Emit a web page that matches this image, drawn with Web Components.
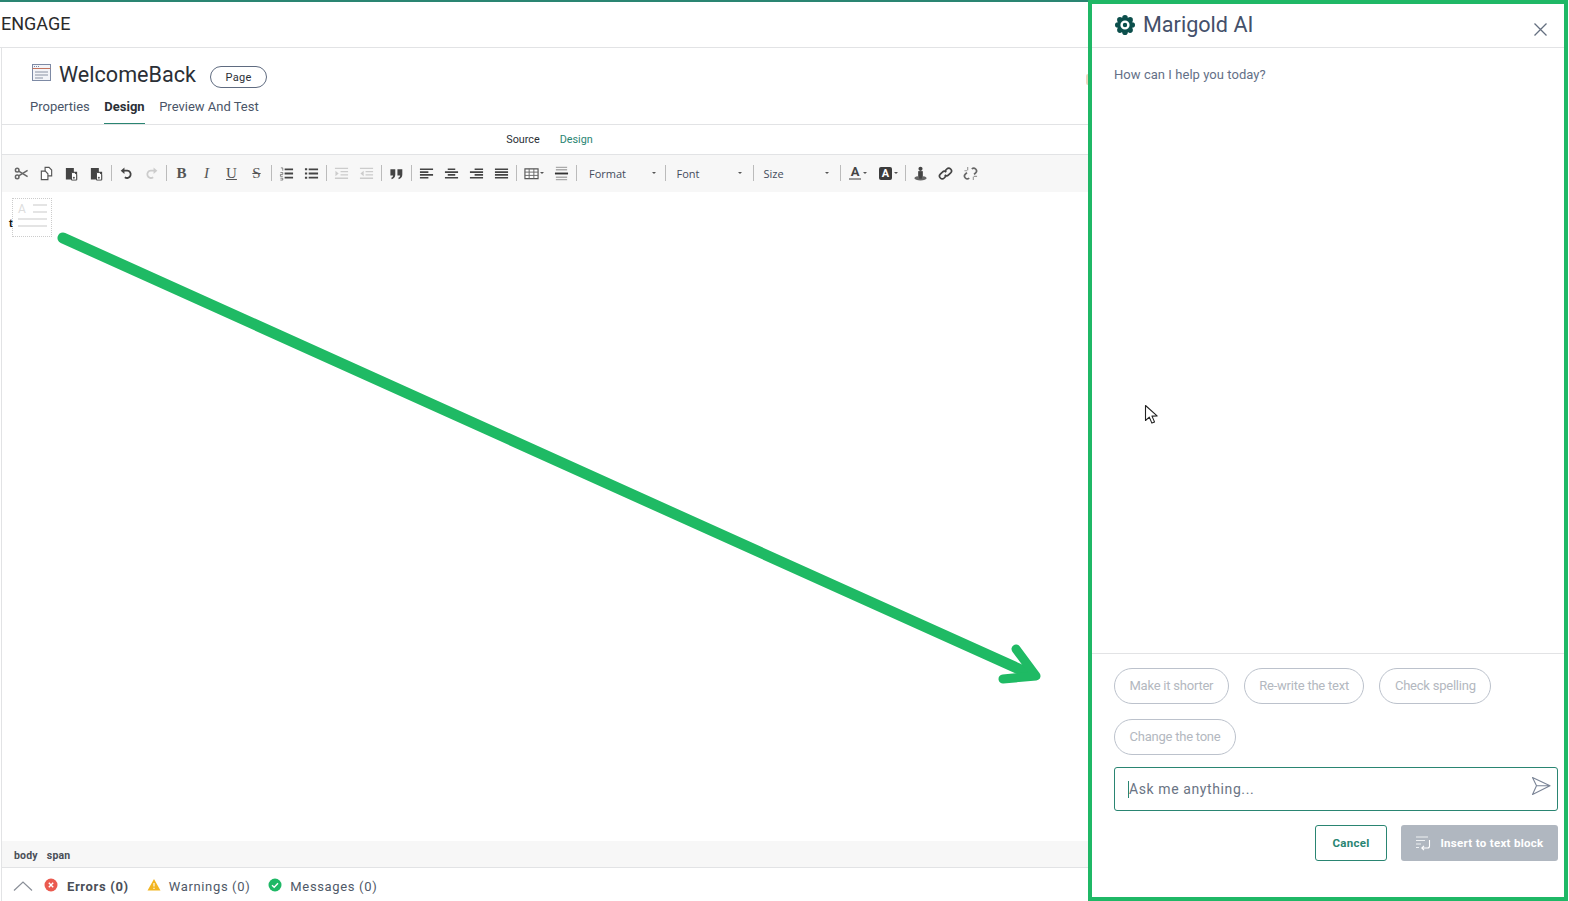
<!DOCTYPE html>
<html lang="en">
<head>
<meta charset="utf-8">
<title>Marigold AI</title>
<style>
  html, body { margin: 0; padding: 0; height: 100%; background: #fff; overflow: hidden; }
  body { font-family: Roboto, "Liberation Sans", sans-serif; }
</style>
</head>
<body>
<app-shell>
  <editor-pane slot="left"></editor-pane>
  <ai-panel slot="right"></ai-panel>
  <arrow-overlay slot="overlay"></arrow-overlay>
</app-shell>

<script>
// iconos del toolbar, viewBox 16x16
const ICONS = {
  cut: '<g fill="none" stroke="#666" stroke-width="1.6"><circle cx="3.4" cy="4.4" r="1.9"/><circle cx="3.4" cy="11.6" r="1.9"/><path d="M5 5.400 14.500 11.400M5 10.600 14.500 4.600"/></g>',
  copy: '<g fill="#fff" stroke="#555" stroke-width="1.2"><path d="M6.5 1.5h4.2l2.8 2.8v6.2h-7z"/><path d="M2.5 5.5h4.2l2.8 2.8v6.2h-7z"/></g>',
  paste: '<path d="M2 2h8.5v4H14v8.5H2z" fill="#444"/><path d="M8 7h3.2l2.3 2.3v5.7H8z" fill="#fff" stroke="#444"/><path d="M9.500 12.500h2M10.500 11.500v2" stroke="#444"/>',
  undo: '<path d="M5.200 5h3.600a3.900 3.900 0 1 1-2.600 7" fill="none" stroke="#444" stroke-width="1.900"/><path d="M1.800 5 5.800 1.600v6.800z" fill="#444"/>',
  redo: '<path d="M10.800 5H7.200a3.900 3.900 0 1 0 2.600 7" fill="none" stroke="#ccc" stroke-width="1.900"/><path d="M14.200 5 10.200 1.600v6.800z" fill="#ccc"/>',
  ol: '<path d="M6 3.500h9M6 8h9M6 12.500h9" stroke="#444" stroke-width="1.900"/><path d="M2 2h2v3M1.500 7h2.500v2H1.500v2H4M1.500 13h2.500v2H1.500" fill="none" stroke="#666" stroke-width=".8"/>',
  ul: '<path d="M5 3.500h10M5 8h10M5 12.500h10" stroke="#444" stroke-width="1.900"/><path d="M1 3.500h2.400M1 8h2.400M1 12.500h2.400" stroke="#444" stroke-width="2.200"/>',
  indent: '<path d="M1 2.500h14M7 6h8M7 9.500h8M1 13h14" stroke="#ccc" stroke-width="1.500"/><path d="M1.500 5v6l3.500-3z" fill="#ccc"/>',
  outdent: '<path d="M1 2.500h14M7 6h8M7 9.500h8M1 13h14" stroke="#ccc" stroke-width="1.500"/><path d="M5 5v6L1.500 8z" fill="#ccc"/>',
  quote: '<path d="M1.500 3.500h5.200v5.600c0 2.600-1.400 4.300-3.800 4.900l-.5-1.500c1.200-.4 1.900-1.200 2-2.400H1.500zM9 3.500h5.200v5.600c0 2.600-1.400 4.300-3.800 4.900l-.5-1.500c1.200-.4 1.900-1.200 2-2.400H9z" fill="#444"/>',
  left: '<path d="M1 3.500h14M1 6.500h9M1 9.500h14M1 12.500h9" stroke="#444" stroke-width="1.700"/>',
  center: '<path d="M4 3.500h8M1 6.500h14M4 9.500h8M1 12.500h14" stroke="#444" stroke-width="1.700"/>',
  right: '<path d="M6 3.500h9M1 6.500h14M6 9.500h9M1 12.500h14" stroke="#444" stroke-width="1.700"/>',
  justify: '<path d="M1 3.500h14M1 6.500h14M1 9.500h14M1 12.500h14" stroke="#444" stroke-width="1.700"/>',
  table: '<path d="M1 3h14v10.500H1z" fill="#fff" stroke="#555" stroke-width="1.200"/><path d="M5.500 3v10.500M10.500 3v10.500M1 6.500h14M1 10h14" stroke="#666" stroke-width="1"/>',
  hr: '<path d="M2 1.500h12M2 4h12M2 12h12M2 14.500h12" stroke="#aaa" stroke-width="1.400"/><path d="M1 8h14" stroke="#333" stroke-width="2"/>',
  anchor: '<circle cx="8" cy="3" r="2.200" fill="#444"/><path d="M5.500 5.500h5v7h-5z" fill="#444"/><ellipse cx="8" cy="13" rx="6.500" ry="2.400" fill="#666"/><path d="M6.500 6v7.500h3V6z" fill="#444"/>',
  link: '<g fill="none" stroke="#444" stroke-width="1.800"><path d="M7.600 5.200 9.400 3.200a2.900 2.900 0 0 1 4.100 0 2.900 2.900 0 0 1 0 4.100L11.300 9.400a2.900 2.900 0 0 1-4.100 0"/><path d="M8.400 10.800 6.600 12.800a2.900 2.900 0 0 1-4.100 0 2.900 2.900 0 0 1 0-4.100L4.700 6.600a2.900 2.900 0 0 1 4.100 0"/></g>',
  unlink: '<g fill="none" stroke="#666" stroke-width="1.800"><path d="M9.400 3.200a2.900 2.900 0 0 1 4.100 0 2.900 2.900 0 0 1 0 4.100L11.800 9"/><path d="M6.600 12.800a2.900 2.900 0 0 1-4.100 0 2.900 2.900 0 0 1 0-4.100L4.200 7"/></g><path d="M5 1v3.500M1.500 5H4.500M11 11.500V15M11.500 11h3.500" stroke="#999" stroke-width="1.200"/>'
};

class AppShell extends HTMLElement {
  constructor() {
    super();
    this.attachShadow({ mode: 'open' });
    this.shadowRoot.innerHTML = `
      <style>
        :host { display: grid; grid-template-columns: 1088px 480px 1px; width: 1569px; height: 901px; position: relative; overflow: hidden; }
        ::slotted(*) { min-width: 0; min-height: 0; }
      </style>
      <slot name="left"></slot>
      <slot name="right"></slot>
      <slot name="overlay"></slot>
    `;
  }
}

class EditorPane extends HTMLElement {
  constructor() {
    super();
    this.attachShadow({ mode: 'open' });
    this.shadowRoot.innerHTML = `
      <style>
        :host { display: flex; flex-direction: column; height: 901px; box-sizing: border-box; border-top: 2px solid #2a8572; position: relative; color: #2b2f36; }
        .brand { height: 46px; box-sizing: border-box; flex: none; display: flex; align-items: center; padding: 0 0 2px 1px; font-size: 18px; color: #2a2a2a; border-bottom: 1px solid #e2e3e5; }
        .body { flex: 1; display: flex; flex-direction: column; border-left: 1px solid #e2e3e5; margin-left: 1px; min-height: 0; }
        .peek { position: absolute; right: 0; top: 72px; width: 2px; height: 11px; background: #ecd6bc; border-radius: 2px 0 0 2px; }
      </style>
      <div class="brand">ENGAGE</div>
      <div class="body">
        <page-heading></page-heading>
        <source-switch></source-switch>
        <editor-toolbar></editor-toolbar>
        <editor-canvas></editor-canvas>
        <path-bar></path-bar>
        <status-bar></status-bar>
      </div>
      <div class="peek"></div>
    `;
  }
}

class PageHeading extends HTMLElement {
  constructor() {
    super();
    this.attachShadow({ mode: 'open' });
    this.shadowRoot.innerHTML = `
      <style>
        :host { display: block; flex: none; height: 77px; box-sizing: border-box; border-bottom: 1px solid #e2e3e5; padding: 0 0 0 28px; }
        .title { display: flex; align-items: center; height: 45px; padding-top: 8px; box-sizing: border-box; }
        svg { display: block; margin: -3px 7px 0 2px; }
        h1 { margin: 0; font-size: 21.600px; font-weight: 400; color: #2b2f36; line-height: 30px; }
        .badge { margin: 5px 0 0 14px; width: 57px; height: 22px; box-sizing: border-box; border: 1px solid #5f6b80; border-radius: 11px; font-size: 11px; display: flex; align-items: center; justify-content: center; color: #2b2f36; letter-spacing: .3px; }
        nav { display: flex; gap: 14.500px; font-size: 13px; color: #4a5568; height: 31px; }
        nav span { height: 31px; box-sizing: border-box; padding-top: 6px; line-height: 16px; }
        nav .on { font-weight: 700; color: #2b2f36; border-bottom: 1px solid #2a8572; }
      </style>
      <div class="title">
        <svg width="20" height="18" viewBox="0 0 20 18" fill="none">
          <rect x=".5" y=".5" width="18" height="16" fill="#f3f4f8" stroke="#7d8aa5"/>
          <path d="M.5 4.500h18" stroke="#c2745f"/>
          <path d="M2 2.500h1M4 2.500h1M6 2.500h1" stroke="#7d8aa5"/>
          <path d="M3 8h13M3 11h13M3 14h8" stroke="#8a92a3"/>
        </svg>
        <h1>WelcomeBack</h1>
        <div class="badge">Page</div>
      </div>
      <nav>
        <span>Properties</span>
        <span class="on">Design</span>
        <span>Preview And Test</span>
      </nav>
    `;
  }
}

class SourceSwitch extends HTMLElement {
  constructor() {
    super();
    this.attachShadow({ mode: 'open' });
    this.shadowRoot.innerHTML = `
      <style>
        :host { display: flex; flex: none; height: 30px; box-sizing: border-box; border-bottom: 1px solid #e2e3e5; justify-content: center; align-items: center; gap: 20px; font-size: 10.800px; color: #2b2f36; padding: 0 0 1px 9px; }
        .on { color: #2a8572; }
      </style>
      <span>Source</span><span class="on">Design</span>
    `;
  }
}

class EditorToolbar extends HTMLElement {
  constructor() {
    super();
    this.attachShadow({ mode: 'open' });
    // | es un separador, texto y combos tienen su propio tipo
    const items = ['cut','copy','paste','paste','|','undo','redo','|','t:B','t:I','t:U','t:S','|','ol','ul','|','indent','outdent','|','quote','|','left','center','right','justify','|','table','hr','|','c:Format','|','c:Font','|','c:Size','|','fg','bg','|','anchor','link','unlink'];
    const html = items.map(it => {
      if (it === '|') return '<i class="sep"></i>';
      if (it.startsWith('c:')) return `<span class="combo ${it.slice(2)}">${it.slice(2)}<b class="caret"></b></span>`;
      if (it.startsWith('t:')) return `<span class="btn txt ${it.slice(2)}">${it.slice(2)}</span>`;
      if (it === 'fg') return '<span class="btn wide"><span class="fg">A</span><b class="caret"></b></span>';
      if (it === 'bg') return '<span class="btn wide bgw"><span class="bgc">A</span><b class="caret"></b></span>';
      if (it === 'table') return `<span class="btn tbl"><svg width="15" height="15" viewBox="0 0 16 16">${ICONS.table}</svg><b class="caret"></b></span>`;
      return `<span class="btn"><svg width="15" height="15" viewBox="0 0 16 16">${ICONS[it]}</svg></span>`;
    }).join('');
    this.shadowRoot.innerHTML = `
      <style>
        :host { display: flex; flex: none; align-items: center; height: 37px; box-sizing: border-box; background: #f7f7f7; padding: 0 0 1px 7px; }
        .btn { flex: none; width: 25px; height: 22px; display: flex; align-items: center; justify-content: center; }
        .sep { flex: none; width: 1px; height: 16px; background: #bbb; margin: 0 2px; }
        .txt { font-family: "Liberation Serif", serif; font-size: 15px; color: #555; line-height: 1; }
        .B { font-weight: 700; }
        .I { font-style: italic; }
        .U { text-decoration: underline; }
        .S { text-decoration: line-through; }
        .tbl { width: 30px; gap: 1px; box-sizing: border-box; }
        .wide { width: 30px; gap: 2px; }
        .bgw { width: 29px; margin-left: 1px; }
        .combo { flex: none; width: 84px; box-sizing: border-box; padding: 0 7px 0 10px; display: flex; align-items: center; justify-content: space-between; font-family: "Open Sans", sans-serif; font-size: 11px; color: #444c5c; }
        .combo.Font { width: 83px; padding: 0 9px 0 8.500px; }
        .combo.Size { width: 82px; padding: 0 9px 0 7.500px; }
        .caret { width: 0; height: 0; border: 2px solid transparent; border-top: 2.500px solid #555; border-bottom: 0; flex: none; }
        .fg { font: 700 13px Roboto, sans-serif; color: #444; border-bottom: 2px solid #999; line-height: 12px; padding: 0 2px; }
        .bgc { font: 700 11px Roboto, sans-serif; color: #fff; background: #3c3c3c; border-radius: 2px; line-height: 13px; padding: 0 3px; }
      </style>
      ${html}
    `;
  }
}

class EditorCanvas extends HTMLElement {
  constructor() {
    super();
    this.attachShadow({ mode: 'open' });
    this.shadowRoot.innerHTML = `
      <style>
        :host { display: block; flex: 1; position: relative; min-height: 0; background: #fff; }
        .ph { position: absolute; left: 10px; top: 6px; width: 38px; height: 37px; border: 1px dotted #ccc; }
        .ph span { position: absolute; left: 5px; top: 3px; font-size: 12px; color: #ddd; line-height: 14px; }
        .ph svg { position: absolute; left: 0; top: 0; }
        .t { position: absolute; left: 7px; top: 24px; font: 700 11px/14px "Liberation Sans", sans-serif; color: #111; }
      </style>
      <div class="ph">
        <span>A</span>
        <svg width="38" height="37" viewBox="0 0 38 37" fill="none">
          <path d="M20 6h14M20 13h14M5 20h29M5 27h29" stroke="#dcdcdc" stroke-width="1.500"/>
        </svg>
      </div>
      <span class="t">t</span>
    `;
  }
}

class PathBar extends HTMLElement {
  constructor() {
    super();
    this.attachShadow({ mode: 'open' });
    this.shadowRoot.innerHTML = `
      <style>
        :host { display: flex; flex: none; align-items: center; gap: 9px; height: 27px; box-sizing: border-box; background: #f7f7f7; border-bottom: 1px solid #e2e3e5; padding: 2px 0 0 12px; font-size: 10.500px; font-weight: 700; color: #4a4f58; letter-spacing: .2px; }
      </style>
      <span>body</span><span>span</span>
    `;
  }
}

class StatusItem extends HTMLElement {
  constructor() {
    super();
    this.attachShadow({ mode: 'open' });
    const kind = this.getAttribute('kind');
    const svg = {
      error: '<circle cx="7" cy="7" r="6.500" fill="#ea5a4f"/><path d="M4.800 4.800l4.400 4.400M9.200 4.800l-4.400 4.400" stroke="#fff" stroke-width="1.400"/>',
      warn: '<path d="M7 1 13.500 12.500H.5z" fill="#f2b521"/><path d="M7 5v3.500M7 9.800v1.200" stroke="#fff" stroke-width="1.100"/>',
      ok: '<circle cx="7" cy="7" r="6.500" fill="#1fb866"/><path d="M4 7.200 6.200 9.200 10 5.200" fill="none" stroke="#fff" stroke-width="1.400"/>'
    }[kind];
    this.shadowRoot.innerHTML = `
      <style>
        :host { display: flex; align-items: center; gap: 8px; font-size: 13px; letter-spacing: .65px; color: #4f5968; }
        :host([kind=error]) { font-weight: 700; color: #4a4f58; gap: 9px; }
        svg { display: block; margin-top: -3px; }
      </style>
      <svg width="14" height="14" viewBox="0 0 14 14">${svg}</svg>
      <slot></slot>
    `;
  }
}

class StatusBar extends HTMLElement {
  constructor() {
    super();
    this.attachShadow({ mode: 'open' });
    this.shadowRoot.innerHTML = `
      <style>
        :host { display: flex; flex: none; height: 33px; box-sizing: border-box; align-items: center; gap: 18px; padding: 4px 0 0 11px; font-size: 13px; }
        svg { display: block; margin: -2px -7px 0 0; }
      </style>
      <svg width="20" height="10" viewBox="0 0 20 10" fill="none"><path d="M1 9.500 10 1l9 8.500" stroke="#8a8f98" stroke-width="1.200"/></svg>
      <status-item kind="error">Errors (0)</status-item>
      <status-item kind="warn">Warnings (0)</status-item>
      <status-item kind="ok">Messages (0)</status-item>
    `;
  }
}

class PromptChip extends HTMLElement {
  constructor() {
    super();
    this.attachShadow({ mode: 'open' });
    this.shadowRoot.innerHTML = `
      <style>
        :host { display: inline-flex; align-items: center; height: 36px; box-sizing: border-box; padding: 0 14.500px 2px; border: 1px solid #bcc2cc; border-radius: 18px; font-size: 13px; letter-spacing: -.23px; color: #b3b8c0; white-space: nowrap; }
      </style>
      <slot></slot>
    `;
  }
}

class AiPanel extends HTMLElement {
  constructor() {
    super();
    this.attachShadow({ mode: 'open' });
    this.shadowRoot.innerHTML = `
      <style>
        :host { display: flex; flex-direction: column; height: 901px; box-sizing: border-box; border: 4px solid #1fb866; background: #fff; color: #4a5568; position: relative; z-index: 2; }
        header { flex: none; height: 44px; box-sizing: border-box; display: flex; align-items: center; padding: 0 17px 2px 22px; border-bottom: 1px solid #e2e3e5; }
        .gear { display: block; margin-right: 7px; flex: none; }
        h2 { margin: 0; font-size: 21.600px; font-weight: 400; color: #44506a; flex: 1; line-height: 28px; }
        .close { display: block; margin-top: 10px; }
        .msg { flex: 1; padding: 19px 22px; font-size: 13px; letter-spacing: .05px; line-height: 16px; color: #647087; min-height: 0; }
        footer { flex: none; height: 244px; box-sizing: border-box; border-top: 1px solid #e2e3e5; padding: 14px 6px 0 22px; display: flex; flex-direction: column; }
        .chips { display: flex; flex-wrap: wrap; gap: 15px; }
        .ask { margin-top: 12px; height: 44px; box-sizing: border-box; border: 1px solid #2a8572; border-radius: 3px; display: flex; align-items: center; padding: 0 6px 0 13px; font-size: 14px; letter-spacing: .6px; color: #6a7484; }
        .ask .caret { width: 1px; height: 17px; background: #2a8572; flex: none; }
        .ask span { flex: 1; }
        .ask svg { display: block; margin-top: -7px; }
        .actions { margin-top: 14px; display: flex; justify-content: flex-end; gap: 14px; }
        .btn { height: 36px; box-sizing: border-box; border-radius: 3px; display: flex; align-items: center; justify-content: center; font-size: 11.500px; font-weight: 700; letter-spacing: .3px; }
        .cancel { width: 72px; border: 1px solid #2a8572; color: #2a8572; }
        .insert { width: 157px; background: #b0b7c0; color: #fff; gap: 9px; }
        .insert svg { display: block; }
      </style>
      <header>
        <svg class="gear" width="22" height="22" viewBox="0 0 22 22">
          <g fill="#0c4f4c">
            <circle cx="11" cy="11" r="7.500"/>
            <circle cx="11" cy="3.800" r="2.800"/><circle cx="11" cy="18.200" r="2.800"/>
            <circle cx="3.800" cy="11" r="2.800"/><circle cx="18.200" cy="11" r="2.800"/>
            <circle cx="5.900" cy="5.900" r="2.800"/><circle cx="16.100" cy="5.900" r="2.800"/>
            <circle cx="5.900" cy="16.100" r="2.800"/><circle cx="16.100" cy="16.100" r="2.800"/>
          </g>
          <circle cx="11" cy="11" r="3.400" fill="none" stroke="#fff" stroke-width="2.400"/>
        </svg>
        <h2>Marigold AI</h2>
        <svg class="close" width="13" height="13" viewBox="0 0 13 13" fill="none"><path d="M.5.500l12 12M12.500.500l-12 12" stroke="#646f80" stroke-width="1.300"/></svg>
      </header>
      <div class="msg">How can I help you today?</div>
      <footer>
        <div class="chips">
          <prompt-chip>Make it shorter</prompt-chip>
          <prompt-chip>Re-write the text</prompt-chip>
          <prompt-chip>Check spelling</prompt-chip>
          <prompt-chip>Change the tone</prompt-chip>
        </div>
        <div class="ask">
          <i class="caret"></i><span>Ask me anything...</span>
          <svg width="20" height="20" viewBox="0 0 20 20" fill="none"><path d="M1.500 1.500 19 9.800 1.500 18.500 5.500 9.800zM5.500 9.800H19" stroke="#7a8496" stroke-width="1.100" stroke-linejoin="round"/></svg>
        </div>
        <div class="actions">
          <div class="btn cancel">Cancel</div>
          <div class="btn insert">
            <svg width="16" height="16" viewBox="0 0 16 16" fill="none"><path d="M1 2h12M1 5.500h9M1 9h5M1 12.500h3" stroke="#fff" stroke-width="1.100" opacity=".8"/><path d="M14.500 5v6a2 2 0 0 1-2 2H7M9 10.800 6.800 13 9 15.200" stroke="#fff" stroke-width="1.100"/></svg>
            <span>Insert to text block</span>
          </div>
        </div>
      </footer>
      <svg style="position:absolute;left:52px;top:400px;" width="16" height="22" viewBox="0 0 16 22">
        <path d="M1.500 1.500v15l3.800-3.400 2.600 6 2.600-1.200-2.500-5.800 5.100-.2z" fill="#fff" stroke="#222" stroke-width="1.100" stroke-linejoin="round"/>
      </svg>
    `;
  }
}

// flecha verde, va por encima del editor
class ArrowOverlay extends HTMLElement {
  constructor() {
    super();
    this.attachShadow({ mode: 'open' });
    this.shadowRoot.innerHTML = `
      <style>
        :host { position: absolute; left: 0; top: 0; pointer-events: none; z-index: 1; display: block; }
        svg { display: block; }
      </style>
      <svg width="1088" height="901" viewBox="0 0 1088 901" fill="none">
        <path d="M63 238 1030 674" stroke="#1fba64" stroke-width="11" stroke-linecap="round"/>
        <path d="M1016 649 1036 676 1003 679" stroke="#1fba64" stroke-width="9" stroke-linecap="round" stroke-linejoin="round"/>
      </svg>
    `;
  }
}

customElements.define('app-shell', AppShell);
customElements.define('editor-pane', EditorPane);
customElements.define('page-heading', PageHeading);
customElements.define('source-switch', SourceSwitch);
customElements.define('editor-toolbar', EditorToolbar);
customElements.define('editor-canvas', EditorCanvas);
customElements.define('path-bar', PathBar);
customElements.define('status-item', StatusItem);
customElements.define('status-bar', StatusBar);
customElements.define('prompt-chip', PromptChip);
customElements.define('ai-panel', AiPanel);
customElements.define('arrow-overlay', ArrowOverlay);
</script>
</body>
</html>
